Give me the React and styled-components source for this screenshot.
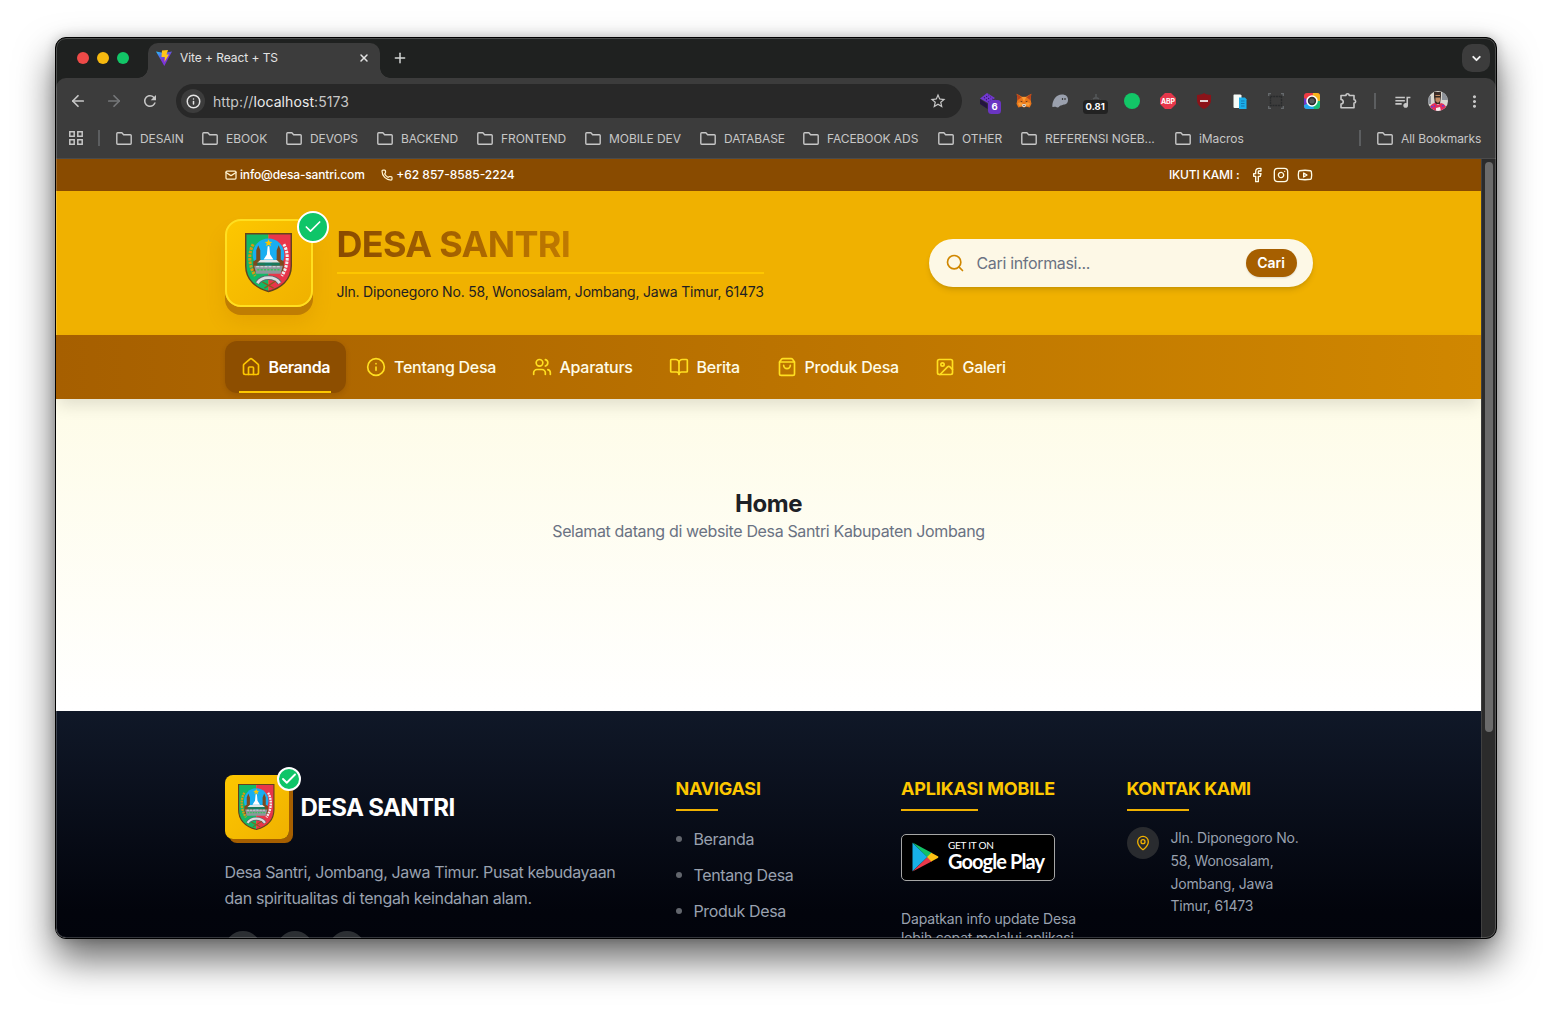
import React from "react";
import styled, { createGlobalStyle, css } from "styled-components";
import {
  ArrowLeft, ArrowRight, BookOpen, Check, ChevronDown, Facebook, House, Image, Info,
  Instagram, Mail, MapPin, Phone, Plus, Search, ShoppingBag, Users, X, Youtube,
} from "lucide-react";
import { MdMoreVert, MdQueueMusic, MdRefresh, MdStarBorder } from "react-icons/md";

const GlobalStyle = createGlobalStyle`
  * { box-sizing: border-box; }
  body {
    margin: 0;
    background: #fff;
    font-family: Inter, "Liberation Sans", sans-serif;
    -webkit-font-smoothing: antialiased;
  }
  h1, h2, h3, p, ul { margin: 0; padding: 0; }
  svg { display: block; flex: none; }
`;

/* ---------- window ---------- */
const Desktop = styled.div`
  height: 1012px;
  padding: 37px 55px 73px;
  overflow: hidden;
`;
const Window = styled.div`
  width: 1442px;
  height: 902px;
  border: 1px solid #000;
  border-radius: 11px;
  overflow: hidden;
  display: flex;
  flex-direction: column;
  background: #1f2120;
  position: relative;
  box-shadow: 0 20px 38px rgba(0, 0, 0, 0.6), 0 0 12px rgba(0, 0, 0, 0.2);
  &::after {
    content: "";
    position: absolute;
    inset: 0;
    border-radius: 10px;
    border: 1px solid rgba(255, 255, 255, 0.2);
    pointer-events: none;
  }
`;

/* ---------- browser chrome ---------- */
const TabStrip = styled.div`
  height: 40px;
  flex: none;
  display: flex;
  align-items: flex-end;
  padding: 0 6px 0 21px;
`;
const Lights = styled.div`
  display: flex;
  gap: 8px;
  margin-bottom: 14px;
`;
const Dot = styled.span`
  width: ${(p) => p.$size || 12}px;
  height: ${(p) => p.$size || 12}px;
  border-radius: 50%;
  background: ${(p) => p.$color};
`;
const Tab = styled.div`
  position: relative;
  width: 232px;
  height: 35px;
  margin-left: 19px;
  padding: 0 10px 6px 8px;
  display: flex;
  align-items: center;
  background: #3c3c3c;
  border-radius: 10px 10px 0 0;
  color: #e3e3e3;
  font-size: 12px;
  letter-spacing: -0.06px;
  &::before, &::after {
    content: "";
    position: absolute;
    bottom: 0;
    width: 10px;
    height: 10px;
  }
  &::before { left: -10px; background: radial-gradient(circle at 0 0, transparent 9.5px, #3c3c3c 10px); }
  &::after { right: -10px; background: radial-gradient(circle at 100% 0, transparent 9.5px, #3c3c3c 10px); }
`;
const TabTitle = styled.span`
  margin-left: 8px;
  flex: 1;
`;
const NewTab = styled.div`
  margin: 0 0 12px 12px;
  color: #d5d7d6;
`;
const TabSearch = styled.div`
  width: 28px;
  height: 28px;
  margin: 0 0 6px auto;
  border-radius: 10px;
  background: #3c3c3c;
  color: #f0f0f0;
  display: grid;
  place-items: center;
`;
const Chrome = styled.div`
  height: 81px;
  flex: none;
  background: #3c3c3c;
  border-radius: 10px 10px 0 0;
  border-bottom: 1px solid #4b4b4b;
`;
const Toolbar = styled.div`
  height: 46px;
  padding-left: 4px;
  display: flex;
  align-items: center;
`;
const Slot = styled.div`
  position: relative;
  width: 36px;
  height: 34px;
  display: grid;
  place-items: center;
  color: ${(p) => p.$color || "#c7c7c7"};
`;
const AddressBar = styled.div`
  width: 786px;
  height: 34px;
  margin: 0 8px;
  padding: 0 15px 0 5px;
  border-radius: 17px;
  background: #282828;
  display: flex;
  align-items: center;
  color: #c7c7c7;
  font-size: 14px;
  letter-spacing: 0.09px;
`;
const SiteInfo = styled.span`
  width: 24px;
  height: 24px;
  border-radius: 50%;
  background: #3c3c3c;
  color: #e3e3e3;
  display: grid;
  place-items: center;
  margin-right: 8px;
`;
const Url = styled.span`
  flex: 1;
  b { font-weight: 400; color: #ececec; }
`;
const Separator = styled.span`
  width: 2px;
  height: 16px;
  margin: ${(p) => p.$margin};
  background: #5c5e60;
`;
const CountBadge = styled.span`
  position: absolute;
  left: ${(p) => p.$left}px;
  top: ${(p) => p.$top}px;
  height: 14px;
  padding: 0 ${(p) => p.$pad}px;
  border-radius: 3.5px;
  background: ${(p) => p.$bg};
  color: #fff;
  font-size: 9.5px;
  font-weight: 700;
  line-height: 14.5px;
`;
const Bookmarks = styled.div`
  height: 28px;
  padding: 0 14px 0 13px;
  display: flex;
  align-items: center;
  color: #c7c7c7;
  font-size: 12px;
  letter-spacing: -0.07px;
`;
const Folder = styled.span`
  display: flex;
  align-items: center;
  gap: 8px;
  margin-right: ${(p) => p.$gap ?? 18}px;
  white-space: nowrap;
  span { width: ${(p) => p.$w}px; }
`;
const Spacer = styled.span`flex: 1;`;

/* ---------- page ---------- */
const Viewport = styled.div`
  flex: 1;
  min-height: 0;
  display: flex;
  overflow: hidden;
`;
const Page = styled.div`
  width: 1425px;
  height: 779px;
  overflow: hidden;
  display: flex;
  flex-direction: column;
  background: #fff;
`;
const ScrollTrack = styled.div`
  width: 15px;
  padding: 3px 3px 0 3px;
  background: #2b2b2b;
  border-left: 1px solid #404040;
`;
const ScrollThumb = styled.div`
  width: 8px;
  height: 570px;
  border-radius: 4px;
  background: #6b6b6b;
`;
const container = css`
  padding-left: 168.5px;
  padding-right: 168.5px;
`;
const TopBar = styled.div`
  ${container}
  height: 32px;
  flex: none;
  background: #894b00;
  color: #fff;
  display: flex;
  align-items: center;
  font-size: 12px;
  line-height: 16px;
  font-weight: 500;
`;
const ContactItem = styled.span`
  display: flex;
  align-items: center;
  gap: 3.5px;
  margin-right: 16px;
  letter-spacing: ${(p) => p.$track}px;
  svg { color: #fff3cf; }
  span { margin-bottom: 1px; }
`;
const Follow = styled.div`
  margin-left: auto;
  display: flex;
  align-items: center;
  gap: 8px;
  color: #fefce8;
  span { color: #fff; letter-spacing: -0.16px; margin: 0 1px 1px 0; }
`;
const Header = styled.header`
  ${container}
  height: 144px;
  flex: none;
  display: flex;
  align-items: center;
  background: #f0b100;
`;
const Tile = styled.div`
  position: relative;
  width: 88px;
  height: 88px;
  flex: none;
  display: grid;
  place-items: center;
  border: 2px solid #ffdf20;
  border-radius: 16px;
  background: linear-gradient(135deg, #fdc700, #f0b100);
  box-shadow: 0 8px 0 #bf7d03, 0 15px 20px rgba(166, 95, 0, 0.16);
`;
const FooterTile = styled(Tile)`
  width: 64px;
  height: 64px;
  border: 0;
  border-radius: 8px;
  box-shadow: 4px 4px 0 #a65f00;
`;
const Verified = styled.span`
  position: absolute;
  top: ${(p) => p.$top}px;
  right: ${(p) => p.$right}px;
  width: ${(p) => p.$size}px;
  height: ${(p) => p.$size}px;
  border: 2px solid #fff;
  border-radius: 50%;
  background: #0fc568;
  color: #fff;
  display: grid;
  place-items: center;
`;
const Brand = styled.div`
  margin-left: 24px;
`;
const Title = styled.h1`
  padding-bottom: 8px;
  border-bottom: 2px solid #fdc700;
  font-size: 36px;
  line-height: 40px;
  font-weight: 700;
  letter-spacing: -0.7px;
  span {
    display: block;
    background: linear-gradient(90deg, #894b00, #d08700 300px);
    background-clip: text;
    -webkit-background-clip: text;
    color: transparent;
  }
`;
const Address = styled.p`
  margin-top: 8px;
  font-size: 14px;
  line-height: 20px;
  letter-spacing: -0.204px;
  color: #1e2022;
`;
const SearchBox = styled.div`
  width: 384px;
  height: 48px;
  margin-left: auto;
  padding: 0 16px;
  border-radius: 24px;
  background: #fdf8e6;
  box-shadow: 0 4px 6px -1px rgba(0, 0, 0, 0.12), 0 2px 4px -2px rgba(0, 0, 0, 0.12);
  display: flex;
  align-items: center;
  color: #d08700;
`;
const Placeholder = styled.span`
  flex: 1;
  margin-left: 12px;
  font-size: 16px;
  letter-spacing: -0.33px;
  color: #6a7282;
`;
const SearchButton = styled.span`
  width: 51px;
  height: 28px;
  border-radius: 14px;
  background: #a65f00;
  color: #fff;
  font-size: 14px;
  font-weight: 600;
  line-height: 28px;
  text-align: center;
  box-shadow: 0 1px 2px rgba(0, 0, 0, 0.12);
`;
const Nav = styled.nav`
  ${container}
  position: relative;
  z-index: 1;
  height: 64px;
  flex: none;
  display: flex;
  align-items: center;
  gap: 4px;
  background: linear-gradient(90deg, #a65f00, #d08700);
  box-shadow: 0 8px 16px -2px rgba(0, 0, 0, 0.12);
`;
const NavItem = styled.a`
  position: relative;
  width: ${(p) => p.$w}px;
  height: 52px;
  padding-left: 16px;
  display: flex;
  align-items: center;
  gap: 8px;
  border-radius: 12px;
  font-size: 16px;
  font-weight: 500;
  letter-spacing: -0.26px;
  white-space: nowrap;
  color: #fefce8;
  svg { color: #ffdf20; }
  ${(p) => p.$active && css`
    background: rgba(137, 75, 0, 0.9);
    box-shadow: 0 2px 5px rgba(80, 40, 0, 0.18);
    color: #fff;
    font-weight: 600;
    letter-spacing: -0.4px;
    svg { color: #fdc700; }
    &::after {
      content: "";
      position: absolute;
      left: 14.5px;
      right: 15px;
      bottom: 0;
      height: 2px;
      background: #fdc700;
    }
  `}
`;
const Main = styled.main`
  height: 312px;
  flex: none;
  padding-top: 89px;
  background: linear-gradient(#fefce8, #fff);
  text-align: center;
`;
const PageTitle = styled.h2`
  font-size: 24px;
  line-height: 32px;
  letter-spacing: -0.45px;
  color: #1e2126;
`;
const Welcome = styled.p`
  margin-top: -1px;
  font-size: 16px;
  line-height: 24px;
  letter-spacing: -0.354px;
  color: #6a7282;
`;

/* ---------- footer ---------- */
const Footer = styled.footer`
  ${container}
  flex: none;
  height: 300px;
  padding-top: 64px;
  background: linear-gradient(#101828, #02040c 200px, #02030a);
  display: grid;
  grid-template-columns: 411px repeat(3, 185.5px);
  column-gap: 40px;
`;
const Column = styled.section`
  white-space: nowrap;
`;
const FooterBrand = styled.div`
  display: flex;
  align-items: center;
  gap: 12px;
  color: #fff;
  font-size: 24px;
  font-weight: 700;
  letter-spacing: -0.62px;
`;
const About = styled.p`
  margin-top: 20px;
  font-size: 16px;
  line-height: 26px;
  letter-spacing: -0.41px;
  color: #99a1af;
  span { letter-spacing: -0.325px; }
`;
const Socials = styled.div`
  display: flex;
  gap: 16px;
  margin-top: 20px;
`;
const SocialCircle = styled.span`
  width: 36px;
  height: 36px;
  border-radius: 50%;
  background: #2c2f33;
  color: #99a1af;
  display: grid;
  place-items: center;
`;
const Heading = styled.h3`
  position: relative;
  width: ${(p) => p.$w}px;
  margin-bottom: 24px;
  font-size: 18px;
  line-height: 28px;
  letter-spacing: ${(p) => p.$track}px;
  color: #fdc700;
  &::after {
    content: "";
    position: absolute;
    left: 0;
    bottom: -8px;
    width: 50%;
    height: 2px;
    background: #f0b100;
  }
`;
const Links = styled.ul`
  list-style: none;
  display: grid;
  gap: 12px;
`;
const LinkItem = styled.li`
  display: flex;
  align-items: center;
  gap: 12px;
  font-size: 16px;
  line-height: 24px;
  letter-spacing: -0.36px;
  color: #99a1af;
  &::before {
    content: "";
    width: 6px;
    height: 6px;
    border-radius: 50%;
    background: #62666d;
  }
`;
const PlayBadge = styled.div`
  width: 154px;
  height: 47px;
  margin-top: 31px;
  padding: 0 0 3px 10px;
  display: flex;
  align-items: center;
  gap: 9px;
  border: 1px solid #a6a6a6;
  border-radius: 5px;
  background: #000;
  color: #fff;
  font-family: Lato, sans-serif;
  svg { margin-top: 2px; }
`;
const PlayText = styled.div`
  small {
    display: block;
    font-size: 10px;
    line-height: 10px;
    letter-spacing: -0.25px;
  }
  strong {
    display: block;
    font-size: 20px;
    line-height: 22px;
    font-weight: 700;
    letter-spacing: -0.9px;
  }
`;
const AppNote = styled.p`
  margin-top: 28px;
  font-size: 14px;
  line-height: 19.25px;
  letter-spacing: -0.16px;
  color: #99a1af;
`;
const ContactRow = styled.div`
  display: flex;
  gap: 12px;
`;
const PinCircle = styled.span`
  width: 32px;
  height: 32px;
  border-radius: 50%;
  background: #292b2f;
  color: #f0b100;
  display: grid;
  place-items: center;
`;
const ContactText = styled.p`
  font-size: 14px;
  line-height: 22.75px;
  letter-spacing: -0.2px;
  color: #99a1af;
`;

/* ---------- drawings ---------- */
const Emblem = ({ width }) => (
  <svg width={width} height={(width * 58) / 46} viewBox="0 0 46 58">
    <defs>
      <clipPath id="shield"><path d="M.7.7h44.6V32C45.300 46 35 54 23 57.300 11 54 .7 46 .7 32Z" /></clipPath>
    </defs>
    <g clipPath="url(#shield)">
      <path fill="#12b866" d="M0 0h23v58H0z" />
      <path fill="#e8364a" d="M23 0h23v58H23z" />
    </g>
    <circle cx="23" cy="21" r="15.500" fill="#18aef0" />
    <path fill="#7b4a1e" d="M8 38V28l3-2v-9l2-5 2 5v9l5 3v9zM38 38V28l-3-2v-9l-2-5-2 5v9l-5 3v9z" />
    <path fill="#fdc700" d="m23 6 1.100 2.500 2.700.2-2.100 1.700.7 2.600-2.400-1.400-2.400 1.400.7-2.600-2.100-1.700 2.700-.2Z" />
    <path fill="#fff" d="M22.200 13h1.600l.8 8 3.200 5h-9.600l3.200-5z" />
    <path fill="#dfe5e6" d="M15 26.500h16l3 2.500H12z" />
    <path fill="#187a5d" d="M12 29h22v3H12z" />
    <path fill="#8d979c" d="M9 32h28l-2 8H11z" />
    <path stroke="#34c759" strokeWidth="1.600" strokeDasharray="2 1.300" d="M12 36h22" />
    <path stroke="#dfe5e6" strokeWidth="1" strokeDasharray="3 1" d="M11 33h24" />
    <path fill="none" stroke="#d49a15" strokeWidth="3" strokeDasharray="2.500 1" d="M8 11C3.500 19 3 31 10 42" />
    <path fill="none" stroke="#eef1f2" strokeWidth="3" strokeDasharray="2.500 1" d="M38 11c4.500 8 5 20-2 31" />
    <path fill="none" stroke="#5d656b" strokeWidth="4.600" d="M12 49c5-7 17-7 22 0" />
    <path fill="none" stroke="#d8dde0" strokeWidth="2.800" d="M12 49c5-7 17-7 22 0" />
    <path fill="none" stroke="#8a5a1e" strokeWidth="1.300" d="m17 48 11 6m2-7-11 7" />
    <path fill="none" stroke="#64421d" strokeWidth="1.400" d="M.7.7h44.6V32C45.300 46 35 54 23 57.300 11 54 .7 46 .7 32Z" />
  </svg>
);

const ViteLogo = () => (
  <svg width="16" height="16" viewBox="0 0 16 16">
    <defs>
      <linearGradient id="vite" x1="0" y1="0" x2=".6" y2="1">
        <stop offset="0" stopColor="#20c4ff" />
        <stop offset=".6" stopColor="#7b35d8" />
      </linearGradient>
    </defs>
    <path fill="url(#vite)" d="M0 1.500 8 3l8-1.500L8.300 16Z" />
    <path fill="#ffc61a" d="M6 .5 12 0l-1.500 4.500H13L8.500 12l.3-5H5.500Z" />
  </svg>
);

const AppsIcon = () => (
  <svg width="14" height="14" viewBox="0 0 14 14" fill="none" stroke="#c7c7c7" strokeWidth="1.500">
    <path d="M.8.8h4.400v4.400H.8zM8.800.8h4.400v4.400H8.800zM.8 8.800h4.400v4.400H.8zM8.800 8.800h4.400v4.400H8.800z" />
  </svg>
);

const FolderIcon = () => (
  <svg width="16" height="13" viewBox="0 0 16 13" fill="none" stroke="#c7c7c7" strokeWidth="1.400" strokeLinejoin="round">
    <path d="M.8 1.700c0-.5.300-.9.800-.9h4.300l1.700 1.900h6.700c.5 0 .9.400.9.900v7.700c0 .5-.4.900-.9.900H1.700c-.5 0-.9-.4-.9-.9Z" />
  </svg>
);

const CubeIcon = () => (
  <svg width="18" height="18" viewBox="0 0 18 18">
    <path fill="#7238d0" d="m8 1 8 5-7 5-8-4.500Z" />
    <path fill="#24143f" d="m1 7 7.500 5v5L1 12z" />
    <path fill="#4b2496" d="m9.500 12 7-5v5l-7 5z" />
    <path stroke="#2b1554" strokeWidth="1.200" strokeDasharray="1 1.600" d="m5 6 5-3M7 8l5-3M9 10l5-3" />
  </svg>
);

const FoxIcon = () => (
  <svg width="16" height="16" viewBox="0 0 16 16">
    <path fill="#e8761b" d="m.7.8 5.300 3h4l5.300-3-.7 6 .9 4-1.800 3.700-4-1-1.700 1.200-1.700-1.200-4 1L.5 10.800l.9-4Z" />
    <path fill="#b8431b" d="m.7.8 4.800 3.500-4 3zM15.300.8l-4.800 3.500 4 3z" />
    <path fill="#fa9b32" d="m5.700 4 2.300 5 2.300-5zM2 10l4-1 1 3-4 1zM14 10l-4-1-1 3 4 1z" />
    <path fill="#ded6cd" d="m5.800 12 1.200-1h2l1.200 1-1 2H6.800z" />
    <path fill="#33251e" d="m4 7.800 2.300.7-.3 1zM12 7.800l-2.300.7.300 1zM7 12h2l-1 1z" />
  </svg>
);

const GhostIcon = () => (
  <svg width="16" height="14" viewBox="0 0 16 14">
    <path fill="#9aa0ad" d="M.3 12C.5 6 4 .5 10 .5c4 0 6 2.200 6 5.300 0 3.400-2 4.700-4 4.700-1.500 0-1.500 1-3 1-1.600 0-1.700 2-3.500 2-1.400 0-1.500-.7-2.500-.7S0 13.600.3 12Z" />
    <path stroke="#3c3c3c" strokeWidth="1.200" d="M10.500 4v2M13 4v2" />
  </svg>
);

const GaugeIcon = () => (
  <svg width="16" height="14" viewBox="0 0 16 14" fill="none" stroke="#55585a" strokeWidth="1.500">
    <path d="M2 8.500 4 6M14 8.500 12 6M5 5c2-1.500 4-1.500 6 0M8 4V0" />
  </svg>
);

const BlockerIcon = () => (
  <svg width="16" height="16" viewBox="0 0 16 16">
    <path fill="#e5364a" d="M5 0h6l5 5v6l-5 5H5l-5-5V5Z" />
    <text x="8" y="10.600" textAnchor="middle" fontFamily="Inter, sans-serif" fontWeight="700" fontSize="7" letterSpacing="-.2" fill="#fff">ABP</text>
  </svg>
);

const ShieldIcon = () => (
  <svg width="14" height="16" viewBox="0 0 14 16">
    <path fill="#8b1319" d="M7 0c2 1.500 4.500 1.900 7 2v5c0 4.500-3 7-7 9-4-2-7-4.500-7-9V2c2.500-.1 5-.5 7-2Z" />
    <path fill="#e6d5d5" d="M3 7h8v2H3z" />
  </svg>
);

const PagesIcon = () => (
  <svg width="14" height="15" viewBox="0 0 14 15">
    <path fill="#f5fbf8" d="M1.500.5h6l1 1V14h-7A1 1 0 0 1 .5 13V1.500c0-.6.400-1 1-1Z" />
    <path fill="#1aaeea" d="M6 3.500h6l1.500 1.800V15H6z" />
    <path stroke="#1378b5" d="M8 7h3.500M8 9.500h3.500M8 12h3.500" />
  </svg>
);

const CaptureIcon = () => (
  <svg width="16" height="16" viewBox="0 0 16 16" fill="none">
    <path stroke="#666a6d" strokeWidth="1.300" d="M.7 3V.7H3M13 .7h2.300V3M.7 13v2.300H3M13 15.300h2.300V13" />
    <path stroke="#292b2c" strokeWidth="1.400" strokeDasharray="2 .7" d="M2.500 3.500h11v9h-11z" />
  </svg>
);

const CameraIcon = () => (
  <svg width="16" height="16" viewBox="0 0 16 16">
    <rect width="16" height="16" rx="3" fill="#ef3b43" />
    <path fill="#f6b51c" d="M9 0h4a3 3 0 0 1 3 3v6L8 8z" />
    <path fill="#16bd76" d="M16 8v5a3 3 0 0 1-3 3H8V8z" />
    <path fill="#22a7ee" d="M10 16H3a3 3 0 0 1-3-3v-1l8-4z" />
    <path fill="#6c36c9" d="M0 12V5l8 3z" />
    <circle cx="8" cy="8" r="5" fill="#2b2d2e" stroke="#fff" strokeWidth="1.600" />
    <circle cx="8" cy="8" r="2.600" fill="#55585a" />
  </svg>
);

const PuzzleIcon = () => (
  <svg width="18" height="18" viewBox="0 0 18 18" fill="none" stroke="#c7c7c7" strokeWidth="1.600" strokeLinejoin="round">
    <path d="M2 3.500h5c0-2.400 3.200-2.400 3.200 0h4.800v4.300c2.200 0 2.200 3.200 0 3.200v4.800H2v-3.700c3-.4 3-4.200 0-4.600Z" />
  </svg>
);

const Avatar = () => (
  <svg width="20" height="20" viewBox="0 0 20 20">
    <defs><clipPath id="face"><circle cx="10" cy="10" r="10" /></clipPath></defs>
    <g clipPath="url(#face)">
      <path fill="#d9d7cf" d="M0 0h20v20H0z" />
      <path fill="#8d9299" d="M14 0h6v9h-6zM0 5h3v8H0z" />
      <path fill="#3a2c26" d="M6 1h7v4l-1 8H7L6 6z" />
      <path fill="#c18a62" d="M7.500 4h4.500v6l-2 2-2.500-2z" />
      <path fill="#2d2621" d="M7 5h5v1.500H7z" />
      <path fill="#e02f5c" d="M1 20c0-5 3-7.500 6-8l3 2 3-2c4 1 6 4 6 8z" />
      <path fill="#f2f2f2" d="m8 17 4-1 1 4H8z" />
      <path fill="#6e3ad0" d="M3 15h2v1.500H3zM14 14h2v1.500h-2zM6 14h1v2H6z" />
    </g>
  </svg>
);

const PlayLogo = () => (
  <svg width="27" height="30" viewBox="0 0 27 30">
    <path fill="#17b0e8" d="M.5.8v28.400L15.500 15Z" />
    <path fill="#12c167" d="M.5.5 20 11l-4.500 4.200Z" />
    <path fill="#e8384a" d="m.5 29.500 15-14.500 4.500 4.200Z" />
    <path fill="#fdc113" d="m19.300 10.700 6.500 3.600c.8.400.8 1.200 0 1.600L19.300 19.500 15 15Z" />
  </svg>
);

/* ---------- data ---------- */
const bookmarks = [
  ["DESAIN", 44], ["EBOOK", 42], ["DEVOPS", 49], ["BACKEND", 58], ["FRONTEND", 66],
  ["MOBILE DEV", 73], ["DATABASE", 61], ["FACEBOOK ADS", 93], ["OTHER", 41],
  ["REFERENSI NGEB...", 112], ["iMacros", 44],
];
const navItems = [
  ["Beranda", House, 121.5], ["Tentang Desa", Info, 161.5], ["Aparaturs", Users, 133],
  ["Berita", BookOpen, 104], ["Produk Desa", ShoppingBag, 154], ["Galeri", Image, 104],
];
const footerLinks = ["Beranda", "Tentang Desa", "Produk Desa"];

function BrowserChrome() {
  return (
    <>
      <TabStrip>
        <Lights>
          <Dot $color="#ee4a48" />
          <Dot $color="#f6b90f" />
          <Dot $color="#12c667" />
        </Lights>
        <Tab>
          <ViteLogo />
          <TabTitle>Vite + React + TS</TabTitle>
          <X size={12} strokeWidth={3} />
        </Tab>
        <NewTab><Plus size={16} strokeWidth={2.2} /></NewTab>
        <TabSearch><ChevronDown size={13} strokeWidth={3.5} /></TabSearch>
      </TabStrip>
      <Chrome>
        <Toolbar>
          <Slot><ArrowLeft size={18} strokeWidth={2.3} /></Slot>
          <Slot $color="#757779"><ArrowRight size={18} strokeWidth={2.3} /></Slot>
          <Slot><MdRefresh size={18} /></Slot>
          <AddressBar>
            <SiteInfo><Info size={15} strokeWidth={2.4} /></SiteInfo>
            <Url>http://<b>localhost</b>:5173</Url>
            <MdStarBorder size={18} />
          </AddressBar>
          <Slot><CubeIcon /><CountBadge $left={18} $top={16} $pad={3.5} $bg="#6a35c2">6</CountBadge></Slot>
          <Slot><FoxIcon /></Slot>
          <Slot><GhostIcon /></Slot>
          <Slot><GaugeIcon /><CountBadge $left={4.5} $top={16} $pad={3} $bg="#222">0.81</CountBadge></Slot>
          <Slot><Dot $size={16} $color="#12c667" /></Slot>
          <Slot><BlockerIcon /></Slot>
          <Slot><ShieldIcon /></Slot>
          <Slot><PagesIcon /></Slot>
          <Slot><CaptureIcon /></Slot>
          <Slot><CameraIcon /></Slot>
          <Slot><PuzzleIcon /></Slot>
          <Separator $margin="0 8px" />
          <Slot><MdQueueMusic size={19} /></Slot>
          <Slot><Avatar /></Slot>
          <Slot><MdMoreVert size={19} /></Slot>
        </Toolbar>
        <Bookmarks>
          <AppsIcon />
          <Separator $margin="0 16px 0 15px" />
          {bookmarks.map(([name, w]) => (
            <Folder key={name} $w={w}><FolderIcon /><span>{name}</span></Folder>
          ))}
          <Spacer />
          <Separator $margin="0 16px 0 0" />
          <Folder $w={81} $gap={0}><FolderIcon /><span>All Bookmarks</span></Folder>
        </Bookmarks>
      </Chrome>
    </>
  );
}

export default function App() {
  return (
    <Desktop>
      <GlobalStyle />
      <Window>
        <BrowserChrome />
        <Viewport>
          <Page>
            <TopBar>
              <ContactItem $track={-0.15}><Mail size={12} strokeWidth={2.5} /><span>info@desa-santri.com</span></ContactItem>
              <ContactItem $track={0}><Phone size={12} strokeWidth={2.5} /><span>+62 857-8585-2224</span></ContactItem>
              <Follow>
                <span>IKUTI KAMI :</span>
                <Facebook size={16} /><Instagram size={16} /><Youtube size={16} />
              </Follow>
            </TopBar>
            <Header>
              <Tile>
                <Emblem width={47} />
                <Verified $size={32} $top={-10} $right={-18}><Check size={20} strokeWidth={2} /></Verified>
              </Tile>
              <Brand>
                <Title><span>DESA SANTRI</span></Title>
                <Address>Jln. Diponegoro No. 58, Wonosalam, Jombang, Jawa Timur, 61473</Address>
              </Brand>
              <SearchBox>
                <Search size={20} />
                <Placeholder>Cari informasi...</Placeholder>
                <SearchButton>Cari</SearchButton>
              </SearchBox>
            </Header>
            <Nav>
              {navItems.map(([name, Icon, w], i) => (
                <NavItem key={name} $w={w} $active={i === 0}>
                  <Icon size={20} strokeWidth={2} />{name}
                </NavItem>
              ))}
            </Nav>
            <Main>
              <PageTitle>Home</PageTitle>
              <Welcome>Selamat datang di website Desa Santri Kabupaten Jombang</Welcome>
            </Main>
            <Footer>
              <Column>
                <FooterBrand>
                  <FooterTile>
                    <Emblem width={36.5} />
                    <Verified $size={24} $top={-8} $right={-12}><Check size={18} strokeWidth={2.5} /></Verified>
                  </FooterTile>
                  DESA SANTRI
                </FooterBrand>
                <About>
                  Desa Santri, Jombang, Jawa Timur. Pusat kebudayaan<br />
                  <span>dan spiritualitas di tengah keindahan alam.</span>
                </About>
                <Socials>
                  <SocialCircle><Facebook size={16} /></SocialCircle>
                  <SocialCircle><Instagram size={16} /></SocialCircle>
                  <SocialCircle><Youtube size={16} /></SocialCircle>
                </Socials>
              </Column>
              <Column>
                <Heading $w={85} $track={-0.25}>NAVIGASI</Heading>
                <Links>{footerLinks.map((l) => <LinkItem key={l}>{l}</LinkItem>)}</Links>
              </Column>
              <Column>
                <Heading $w={154} $track={-0.15}>APLIKASI MOBILE</Heading>
                <PlayBadge>
                  <PlayLogo />
                  <PlayText><small>GET IT ON</small><strong>Google Play</strong></PlayText>
                </PlayBadge>
                <AppNote>Dapatkan info update Desa<br />lebih cepat melalui aplikasi</AppNote>
              </Column>
              <Column>
                <Heading $w={124} $track={-0.45}>KONTAK KAMI</Heading>
                <ContactRow>
                  <PinCircle><MapPin size={16} /></PinCircle>
                  <ContactText>
                    Jln. Diponegoro No.<br />58, Wonosalam,<br />Jombang, Jawa<br />Timur, 61473
                  </ContactText>
                </ContactRow>
              </Column>
            </Footer>
          </Page>
          <ScrollTrack><ScrollThumb /></ScrollTrack>
        </Viewport>
      </Window>
    </Desktop>
  );
}
